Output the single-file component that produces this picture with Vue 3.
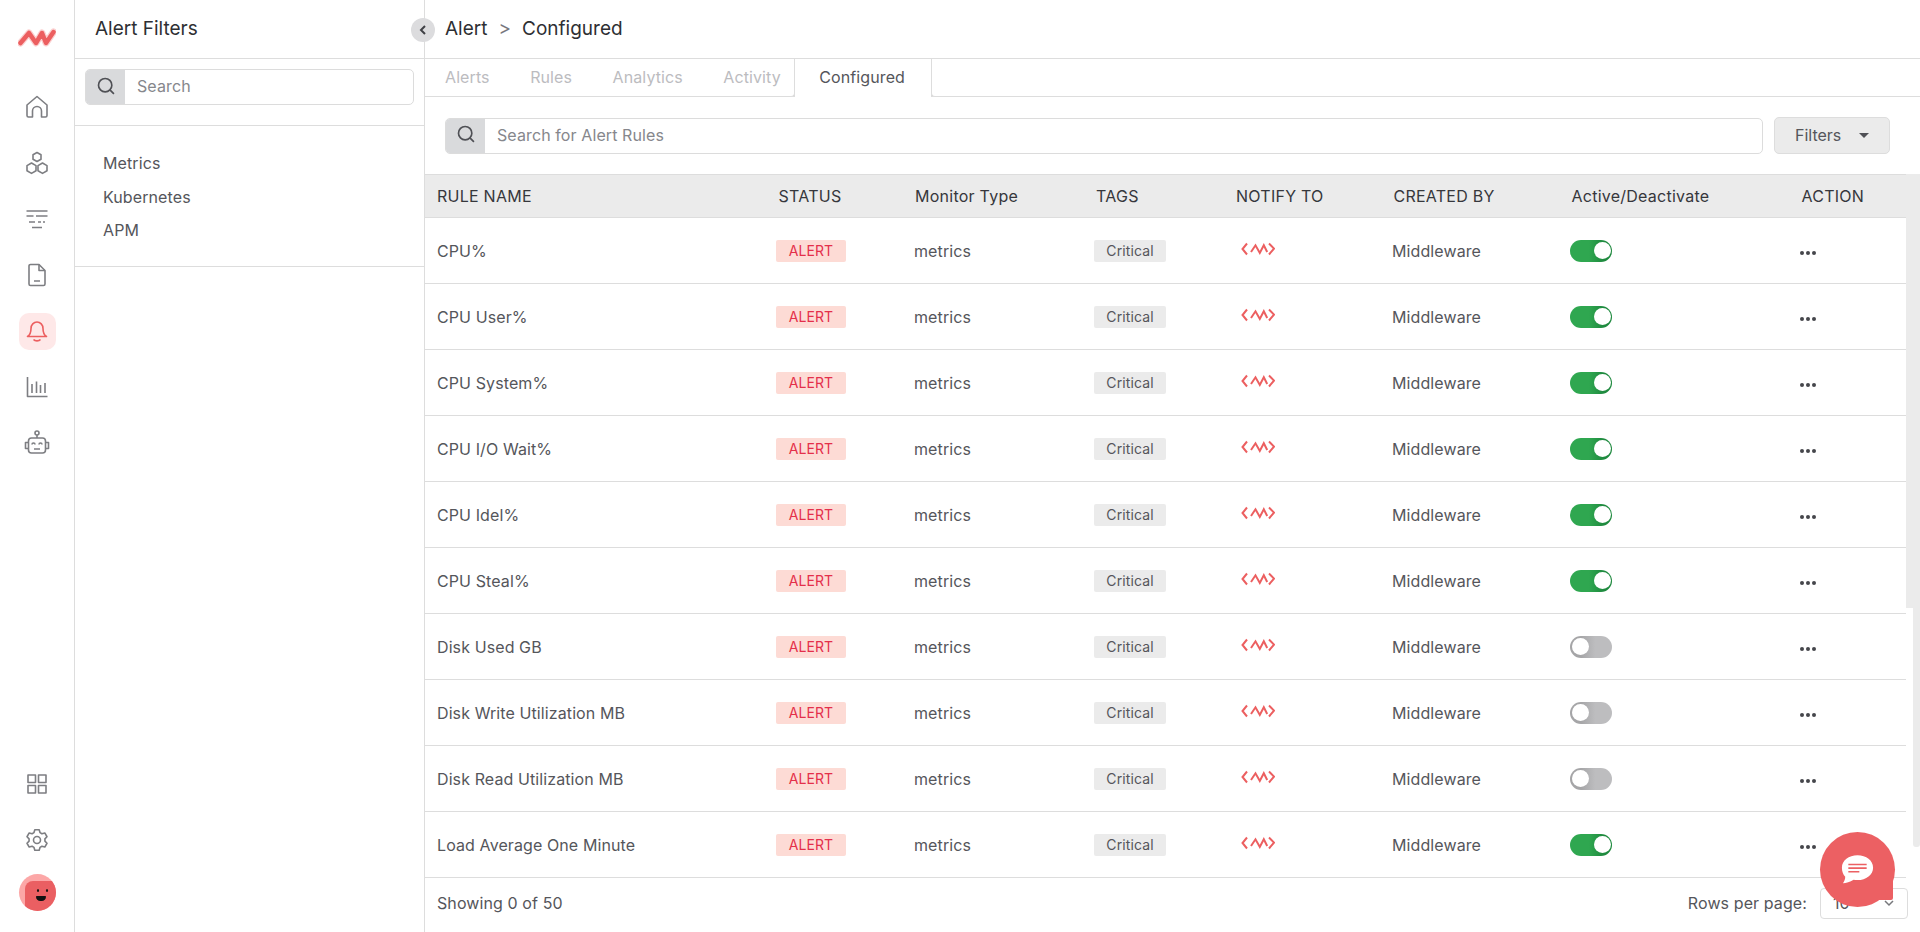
<template>
  <div class="app">
    <nav class="rail">
      <div class="rail__logo">
        <svg width="38" height="20" viewBox="0 0 38 20" aria-hidden="true">
          <path class="logo-glow" d="M2.500 15L11 5l7 10 6-10 4 10 7.500-11" />
          <path class="logo-line" d="M2.500 15L11 5l7 10 6-10 4 10 7.500-11" />
        </svg>
      </div>
      <a class="rail__item">
        <svg viewBox="0 0 24 24"><path d="M2 20.500V10l10-8.500L22 10v10.500a1.500 1.500 0 0 1-1.500 1.500h-4v-6a4.500 4.500 0 0 0-9 0v6h-4A1.500 1.500 0 0 1 2 20.500z" /></svg>
      </a>
      <a class="rail__item">
        <svg viewBox="0 0 24 24">
          <path d="M12 1.500l4 2.250v4.500l-4 2.250-4-2.250v-4.500z" />
          <path d="M6.500 12l4.500 2.600v5.200l-4.500 2.600L2 19.800v-5.200z" />
          <path d="M17.500 12l4.500 2.600v5.200l-4.500 2.600-4.500-2.600v-5.200z" />
        </svg>
      </a>
      <a class="rail__item">
        <svg viewBox="0 0 24 24">
          <path d="M1.500 4h21M1.500 9h7M11 9h11.500M4 15h6M13 15h3M18 15h2M7 20.500h10" />
        </svg>
      </a>
      <a class="rail__item">
        <svg viewBox="0 0 24 24">
          <path d="M4 3a1.500 1.500 0 0 1 1.500-1.500H14L20 7.500v13.500a1.500 1.500 0 0 1-1.500 1.500h-13A1.500 1.500 0 0 1 4 21z" />
          <path d="M14 1.500v6h6M9 18h6" />
        </svg>
      </a>
      <a class="rail__item rail__item--active">
        <svg viewBox="0 0 24 24">
          <path d="M2.500 17.500C5 16 6 13.500 6 9.500a6 6.500 0 0 1 12 0c0 4 1 6.500 3.500 8z" />
          <path d="M8.500 20.500c1.500 1.800 5.500 1.800 7 0" />
        </svg>
      </a>
      <a class="rail__item">
        <svg viewBox="0 0 24 24">
          <path d="M2.500 2v19.500h20M7 9v9M11.500 6.500V18M15.500 10v8M20 8v10" />
        </svg>
      </a>
      <a class="rail__item">
        <svg viewBox="0 0 28 28" class="rail__robot">
          <circle cx="14" cy="4" r="2" />
          <path d="M14 6v3" />
          <rect x="5.500" y="9" width="17" height="15" rx="3" />
          <path d="M5.500 13.500H2.500v6h3M22.500 13.500h3v6h-3M11 20h6" />
          <path d="M9 15.500a1.500 1.500 0 0 1 3 0M16 15.500a1.500 1.500 0 0 1 3 0" />
        </svg>
      </a>

      <div class="rail__bottom">
        <a class="rail__item">
          <svg viewBox="0 0 24 24">
            <rect x="3" y="3" width="7.500" height="7.500" />
            <rect x="13.500" y="3" width="7.500" height="7.500" />
            <rect x="3" y="13.500" width="7.500" height="7.500" />
            <rect x="13.500" y="13.500" width="7.500" height="7.500" />
          </svg>
        </a>
        <a class="rail__item">
          <svg viewBox="0 0 24 24">
            <circle cx="12" cy="12" r="3.500" />
            <path d="M9.820 1.730h4.360L15 4.580l1.930 1.120 2.870-.73 2.190 3.790-2.070 2.130v2.220l2.070 2.130-2.190 3.790-2.870-.73L15 19.420l-.82 2.850H9.820L9 19.420l-1.930-1.120-2.870.73-2.190-3.790 2.070-2.130v-2.220L2.010 8.760l2.190-3.790 2.870.73L9 4.580z" />
          </svg>
        </a>
        <div class="avatar">
          <div class="avatar__face">
            <i class="avatar__eye avatar__eye--l"></i>
            <i class="avatar__eye avatar__eye--r"></i>
            <i class="avatar__mouth"></i>
          </div>
        </div>
      </div>
    </nav>

    <aside class="filters">
      <div class="filters__title">Alert Filters</div>
      <div class="filters__search">
        <div class="search">
          <span class="search__addon">
            <svg viewBox="0 0 24 24"><circle cx="11" cy="11" r="8" /><path d="M17 17l4.500 4.500" /></svg>
          </span>
          <span class="search__text">Search</span>
        </div>
      </div>
      <ul class="filters__list">
        <li v-for="item in filterItems" :key="item">{{ item }}</li>
      </ul>
      <button class="collapse" aria-label="Collapse">
        <svg viewBox="0 0 12 12"><path d="M8 2L4 6l4 4" /></svg>
      </button>
    </aside>

    <main class="main">
      <header class="crumbs">
        <span>Alert</span>
        <span class="crumbs__sep">&gt;</span>
        <span>Configured</span>
      </header>

      <div class="tabs">
        <span v-for="tab in tabs" :key="tab" class="tabs__item">{{ tab }}</span>
        <span class="tabs__item tabs__item--active">Configured</span>
      </div>

      <div class="toolbar">
        <div class="search search--wide">
          <span class="search__addon">
            <svg viewBox="0 0 24 24"><circle cx="11" cy="11" r="8" /><path d="M17 17l4.500 4.500" /></svg>
          </span>
          <span class="search__text">Search for Alert Rules</span>
        </div>
        <button class="filter-btn">Filters<i class="filter-btn__caret"></i></button>
      </div>

      <div class="table">
        <div class="table__row table__row--head">
          <span v-for="col in columns" :key="col.label" :style="{ marginLeft: col.nudge + 'px' }">{{ col.label }}</span>
        </div>
        <div v-for="row in rows" :key="row.name" class="table__row">
          <span>{{ row.name }}</span>
          <span><b class="badge badge--alert">ALERT</b></span>
          <span>metrics</span>
          <span><b class="badge badge--tag">Critical</b></span>
          <span class="notify">
            <svg width="34" height="16" viewBox="0 0 34 16" aria-hidden="true">
              <path d="M6 2.500L1.500 8 6 13.500" />
              <path d="M10 11l4.500-6.700L18.800 12l4-7.700 3.400 6.700" />
              <path d="M28 2.500L33 7.600 28 13.500" />
            </svg>
          </span>
          <span>Middleware</span>
          <span><i class="toggle" :class="{ 'toggle--on': row.active }"></i></span>
          <span class="dots"><i></i><i></i><i></i></span>
        </div>
        <div class="scroll-thumb"></div>
      </div>

      <footer class="pager">
        <span>Showing 0 of 50</span>
        <div class="pager__rows">
          <span>Rows per page:</span>
          <div class="pager__select">
            <span>10</span>
            <svg viewBox="0 0 12 12"><path d="M2 4l4 4 4-4" /></svg>
          </div>
        </div>
      </footer>
    </main>

    <div class="page-thumb"></div>

    <button class="chat" aria-label="Chat">
      <svg width="33" height="31" viewBox="0 0 36 33" aria-hidden="true">
        <path class="chat__bubble" d="M18 1c9.500 0 17 5.700 17 13.500S27.500 28 18 28c-1.500 0-3-.2-4.300-.4C10 30 5.500 31.500 2 31.500c1.500-2 2.600-4.300 2.600-7.200C2.300 21.800 1 18.500 1 14.500 1 6.700 8.500 1 18 1z" />
        <path class="chat__lines" d="M8 11h20M8 15h20M8 19h12" />
      </svg>
    </button>
  </div>
</template>

<script setup>
const filterItems = ["Metrics", "Kubernetes", "APM"];
const tabs = ["Alerts", "Rules", "Analytics", "Activity"];

// nudge = how far the header label sits right of its column start
const columns = [
  { label: "RULE NAME", nudge: 0 },
  { label: "STATUS", nudge: 2.5 },
  { label: "Monitor Type", nudge: 1 },
  { label: "TAGS", nudge: 2 },
  { label: "NOTIFY TO", nudge: 0 },
  { label: "CREATED BY", nudge: 1.5 },
  { label: "Active/Deactivate", nudge: 1.5 },
  { label: "ACTION", nudge: 1.5 },
];

const rows = [
  { name: "CPU%", active: true },
  { name: "CPU User%", active: true },
  { name: "CPU System%", active: true },
  { name: "CPU I/O Wait%", active: true },
  { name: "CPU Idel%", active: true },
  { name: "CPU Steal%", active: true },
  { name: "Disk Used GB", active: false },
  { name: "Disk Write Utilization MB", active: false },
  { name: "Disk Read Utilization MB", active: false },
  { name: "Load Average One Minute", active: true },
];
</script>

<style>
html,
body {
  margin: 0;
  background: #fff;
}
</style>

<style scoped>
.app {
  position: relative;
  display: flex;
  height: 932px;
  overflow: hidden;
  font-family: Inter, "Noto Sans", sans-serif;
  font-size: 16px;
  letter-spacing: .1px;
  color: #55565b;
}

/* left icon rail */
.rail {
  flex: 0 0 74px;
  display: flex;
  flex-direction: column;
  align-items: center;
  border-right: 1px solid #ddd;
}

.rail__logo {
  height: 79px;
  display: flex;
  align-items: flex-start;
  padding-top: 28px;
  box-sizing: border-box;
}

.logo-glow,
.logo-line {
  fill: none;
  stroke-linejoin: round;
  stroke-linecap: round;
}

.logo-glow {
  stroke: #fbd0d0;
  stroke-width: 7;
}

.logo-line {
  stroke: #ec5f60;
  stroke-width: 4.500;
}

.rail__item {
  width: 37px;
  height: 37px;
  margin: 9.500px 0;
  display: flex;
  align-items: center;
  justify-content: center;
  border-radius: 10px;
}

.rail__item svg {
  width: 24px;
  height: 24px;
  fill: none;
  stroke: #7d7e82;
  stroke-width: 1.600;
  stroke-linejoin: round;
}

.rail__item .rail__robot {
  width: 28px;
  height: 28px;
}

.rail__item--active {
  background: #fee8e8;
}

.rail__item--active svg {
  stroke: #ec5f60;
}

.rail__bottom {
  margin-top: auto;
  padding-bottom: 21px;
  display: flex;
  flex-direction: column;
  align-items: center;
}

.avatar {
  width: 37px;
  height: 37px;
  margin-top: 6px;
  border-radius: 50%;
  background: #fca7a7;
  overflow: hidden;
  position: relative;
}

.avatar__face {
  position: absolute;
  left: 6px;
  top: 7px;
  width: 40px;
  height: 40px;
  border-radius: 8px;
  background: #ea5f62;
}

.avatar__eye {
  position: absolute;
  top: 8px;
  width: 2px;
  height: 3px;
  border-radius: 50%;
  background: #111;
}

.avatar__eye--l {
  left: 12px;
}

.avatar__eye--r {
  left: 21px;
}

.avatar__mouth {
  position: absolute;
  left: 11px;
  top: 15px;
  width: 10px;
  height: 5px;
  background: #111;
  border-radius: 1px 1px 6px 6px;
}

/* filter panel */
.filters {
  position: relative;
  flex: 0 0 349px;
  border-right: 1px solid #ddd;
}

.filters__title {
  height: 59px;
  box-sizing: border-box;
  padding: 18px 21px 0 20px;
  font-size: 19px;
  line-height: 22px;
  letter-spacing: 0;
  color: #2e2f33;
  border-bottom: 1px solid #ddd;
}

.filters__search {
  padding: 10px 10px 20px;
  border-bottom: 1px solid #ddd;
}

.search {
  display: flex;
  align-items: center;
  height: 36px;
  box-sizing: border-box;
  border: 1px solid #dcdcdc;
  border-radius: 5px;
  overflow: hidden;
  color: #86878c;
}

.search__addon {
  flex: 0 0 39px;
  align-self: stretch;
  display: flex;
  align-items: center;
  justify-content: center;
  background: #d9dadc;
}

.search__addon svg {
  width: 20px;
  height: 20px;
  margin-top: -3px;
  fill: none;
  stroke: #4f5055;
  stroke-width: 2;
}

.search__text {
  padding: 0 0 2px 12px;
}

.filters__list {
  list-style: none;
  margin: 0;
  padding: 21px 0 18.500px 28px;
  border-bottom: 1px solid #ddd;
}

.filters__list li {
  height: 33.500px;
  line-height: 33.500px;
}

.collapse {
  position: absolute;
  top: 18px;
  right: -11px;
  z-index: 2;
  width: 24px;
  height: 24px;
  padding: 0;
  border: 0;
  border-radius: 50%;
  background: #dcdcde;
  display: flex;
  align-items: center;
  justify-content: center;
}

.collapse svg {
  width: 12px;
  height: 12px;
  fill: none;
  stroke: #3f4045;
  stroke-width: 2;
}

/* main column */
.main {
  flex: 1;
  min-width: 0;
  display: flex;
  flex-direction: column;
}

.crumbs {
  height: 59px;
  box-sizing: border-box;
  padding: 18px 20px 0;
  display: flex;
  gap: 11px;
  font-size: 19px;
  line-height: 22px;
  letter-spacing: 0;
  color: #2e2f33;
  border-bottom: 1px solid #ddd;
}

.crumbs__sep {
  color: #77787c;
}

.tabs {
  height: 38px;
  box-sizing: border-box;
  display: flex;
  padding-left: 20px;
  border-bottom: 1px solid #ddd;
}

.tabs__item {
  margin-right: 40.500px;
  line-height: 36px;
  color: #bcbcbf;
}

.tabs__item--active {
  position: relative;
  margin: 0 0 -1px -27px;
  padding: 0 26px 0 24px;
  height: 38px;
  box-sizing: border-box;
  background: #fff;
  color: #55565b;
  border: solid #ddd;
  border-width: 0 1px;
}

/* little flares where the tab meets the rule below it */
.tabs__item--active::before,
.tabs__item--active::after {
  content: "";
  position: absolute;
  bottom: 0;
  width: 4px;
  height: 4px;
  background: #fff;
  border-bottom: 1px solid #ddd;
}

.tabs__item--active::before {
  left: -5px;
  border-right: 1px solid #ddd;
  border-bottom-right-radius: 4px;
}

.tabs__item--active::after {
  right: -5px;
  border-left: 1px solid #ddd;
  border-bottom-left-radius: 4px;
}

.toolbar {
  display: flex;
  gap: 11px;
  padding: 20px 30px 20px 20px;
  align-items: center;
}

.search--wide {
  flex: 1;
}

.filter-btn {
  flex: 0 0 116px;
  height: 37px;
  box-sizing: border-box;
  padding: 0 0 2px 20px;
  display: flex;
  align-items: center;
  background: #ebebeb;
  border: 1px solid #ddd;
  border-radius: 5px;
  font: inherit;
  color: #55565b;
}

.filter-btn__caret {
  margin: 2px 0 0 18px;
  border: 5px solid transparent;
  border-top-color: #4f5055;
  border-bottom: 0;
}

/* table */
.table {
  position: relative;
  padding-right: 14px;
}

.table__row {
  display: grid;
  grid-template-columns: 339px 138px 180px 142px 156px 178px 230px 1fr;
  align-items: center;
  height: 66px;
  box-sizing: border-box;
  padding-left: 12px;
  border-bottom: 1px solid #ddd;
}

.table__row--head {
  height: 44px;
  margin-right: -14px;
  padding-bottom: 1px;
  background: #ebebeb;
  border-top: 1px solid #ddd;
  color: #36373c;
  letter-spacing: .25px;
}

.badge {
  display: inline-block;
  height: 22px;
  box-sizing: border-box;
  border-radius: 2px;
  font-size: 14px;
  font-weight: 400;
  line-height: 22px;
  text-align: center;
  vertical-align: middle;
}

.badge--alert {
  width: 70px;
  background: #fddbd5;
  color: #e42f4a;
}

.badge--tag {
  width: 72px;
  background: #ebebeb;
  color: #55565b;
}

.notify {
  display: flex;
  padding-left: 4.500px;
  margin-top: -4px;
}

.notify path {
  fill: none;
  stroke: #ec5f60;
  stroke-width: 2;
}

.toggle {
  display: block;
  position: relative;
  width: 42px;
  height: 22px;
  border-radius: 11px;
  background: linear-gradient(90deg, #a5a5a7 25%, #bdbdbf 60%);
}

.toggle::after {
  content: "";
  position: absolute;
  top: 2.500px;
  left: 2px;
  width: 17px;
  height: 17px;
  border-radius: 50%;
  background: #fff;
}

.toggle--on {
  background: linear-gradient(90deg, #2fa750 45%, #1f8a3f 80%);
}

.toggle--on::after {
  left: 24px;
}

.dots {
  display: flex;
  gap: 2px;
  padding-top: 5px;
}

.dots i {
  width: 4px;
  height: 4px;
  border-radius: 50%;
  background: #45464b;
}

.scroll-thumb {
  position: absolute;
  top: 0;
  right: 0;
  width: 14px;
  height: 434px;
  background: #ebebeb;
}

.page-thumb {
  position: absolute;
  right: 0;
  top: 608px;
  width: 7px;
  height: 239px;
  border-radius: 0 0 3px 3px;
  background: #ebebeb;
}

.pager {
  flex: 1;
  display: flex;
  align-items: center;
  justify-content: space-between;
  padding: 0 12px 4px;
}

.pager__rows {
  display: flex;
  align-items: center;
  gap: 13px;
}

.pager__select {
  width: 88px;
  height: 31px;
  box-sizing: border-box;
  display: flex;
  align-items: center;
  justify-content: space-between;
  padding: 0 12px;
  border: 1px solid #ddd;
  border-radius: 4px;
}

.pager__select svg {
  width: 12px;
  height: 12px;
  fill: none;
  stroke: #77787c;
  stroke-width: 1.500;
}

/* chat launcher, floats over the table corner */
.chat {
  position: absolute;
  left: 1820px;
  top: 832px;
  z-index: 3;
  width: 75px;
  height: 75px;
  padding: 0;
  border: 0;
  border-radius: 50%;
  background: #ec6063;
  display: flex;
  align-items: center;
  justify-content: center;
}

.chat::after {
  content: "";
  position: absolute;
  right: 2px;
  bottom: 7px;
  width: 30px;
  height: 30px;
  border-radius: 0 0 2px 0;
  background: #ec6063;
}

.chat svg {
  position: relative;
  z-index: 1;
}

.chat__bubble {
  fill: #fff;
}

.chat__lines {
  fill: none;
  stroke: #ec6063;
  stroke-width: 1.800;
}
</style>
